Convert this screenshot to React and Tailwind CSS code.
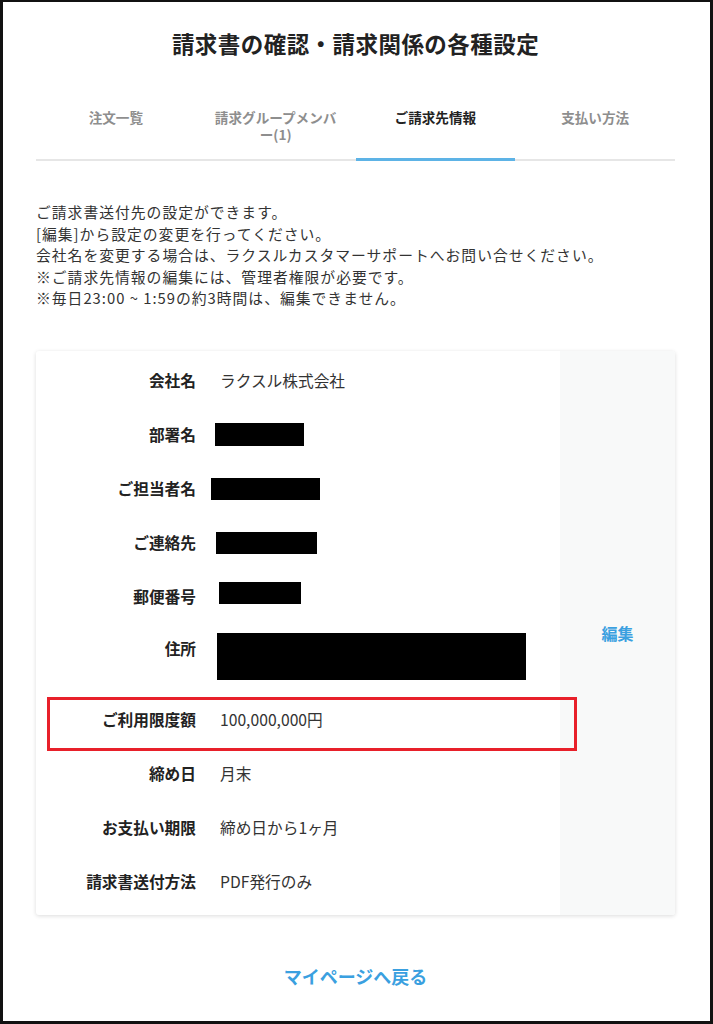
import React from 'react';

const tabs = [
  { label: '注文一覧', active: false },
  { label: '請求グループメンバー(1)', active: false },
  { label: 'ご請求先情報', active: true },
  { label: '支払い方法', active: false },
];

const notes = [
  'ご請求書送付先の設定ができます。',
  '[編集]から設定の変更を行ってください。',
  '会社名を変更する場合は、ラクスルカスタマーサポートへお問い合せください。',
  '※ご請求先情報の編集には、管理者権限が必要です。',
  '※毎日23:00 ~ 1:59の約3時間は、編集できません。',
];

const Redacted = ({ className }) => <div className={`bg-black ${className}`} />;

const Row = ({ label, children }) => (
  <div className="flex h-[54px] items-center">
    <div className="w-[160px] shrink-0 text-right font-bold text-[#222]">{label}</div>
    <div className="ml-6 flex items-center text-[#333]">{children}</div>
  </div>
);

const App = () => {
  return (
    <div
      className="box-border flex h-[1024px] w-[713px] flex-col border-[3px] border-t-2 border-[#111] bg-white pl-[33px] pr-[35px]"
      style={{ fontFamily: '"Noto Sans CJK JP", "Noto Sans", sans-serif' }}
    >
      <h1 className="mt-[26px] text-center text-[22.5px] font-bold leading-[30px] tracking-[0.02em] text-[#222]">
        請求書の確認・請求関係の各種設定
      </h1>

      <div className="mt-[51px] flex border-b-2 border-[#e6e6e6]">
        {tabs.map(tab => (
          <div
            key={tab.label}
            className={`-mb-[2px] h-[52px] flex-1 border-b-[3px] px-4 text-center text-[13.6px] font-bold leading-[17px] ${
              tab.active ? 'border-[#5db3e6] text-[#222]' : 'border-transparent text-[#8e8e8e]'
            }`}
          >
            {tab.label}
          </div>
        ))}
      </div>

      <div className="mt-[40px] text-[14.8px] leading-[21.6px] tracking-[1px] text-[#333]">
        {notes.map(line => (
          <p key={line}>{line}</p>
        ))}
      </div>

      <div className="relative mt-[42px] flex h-[564px] rounded-[3px] bg-white shadow-[0_1px_4px_rgba(0,0,0,0.14)] text-[15.7px] leading-[22px]">
        <div className="flex-1 pt-[3px]">
          <Row label="会社名">ラクスル株式会社</Row>
          <Row label="部署名">
            <Redacted className="-ml-[5px] h-[23px] w-[89px]" />
          </Row>
          <Row label="ご担当者名">
            <Redacted className="-ml-[9px] h-[22px] w-[109px]" />
          </Row>
          <Row label="ご連絡先">
            <Redacted className="-ml-[4px] h-[22px] w-[101px]" />
          </Row>
          <Row label="郵便番号">
            <Redacted className="-ml-[1px] -mt-[8px] h-[22px] w-[82px]" />
          </Row>
          <div className="flex h-[69px] items-start">
            <div className="mt-[14px] w-[160px] shrink-0 text-right font-bold text-[#222]">住所</div>
            <Redacted className="ml-[21px] mt-[9px] h-[47px] w-[309px]" />
          </div>
          <Row label="ご利用限度額">100,000,000円</Row>
          <Row label="締め日">月末</Row>
          <Row label="お支払い期限">締め日から1ヶ月</Row>
          <Row label="請求書送付方法">PDF発行のみ</Row>
        </div>
        <div className="flex w-[115px] items-center justify-center rounded-r-[3px] bg-[#f8f9f9]">
          <a href="#" className="text-[16px] font-bold text-[#3aa0e0]">編集</a>
        </div>
        <div className="pointer-events-none absolute left-[11px] top-[346px] h-[54px] w-[530px] border-[3px] border-[#e8202a]" />
      </div>

      <div className="mt-[48px] text-center">
        <a href="#" className="text-[18px] font-bold leading-[26px] text-[#3aa0e0]">マイページへ戻る</a>
      </div>
    </div>
  );
};

export default App;
